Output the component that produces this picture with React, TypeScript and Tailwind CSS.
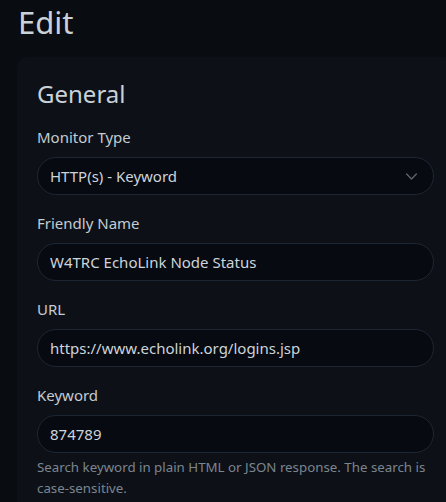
const font = { fontFamily: '"Noto Sans", "Open Sans", sans-serif' }

function Chevron() {
  return (
    <svg viewBox="0 0 16 16" className="h-[13px] w-[13px] text-[#5a626d]" fill="none" stroke="currentColor" strokeWidth={1.8} strokeLinecap="round" strokeLinejoin="round">
      <path d="m2 5 6 6 6-6" />
    </svg>
  )
}

function Field({ label, value, select }: { label: string; value: string; select?: boolean }) {
  return (
    <div className="mb-4">
      <label className="mb-2 block text-[15px] leading-[24px] text-[#c4cbd2]">{label}</label>
      <div className="flex h-[38px] items-center rounded-full border border-[#1d2634] bg-[#070a10] pl-[12px] pr-[15px]">
        <span className="flex-1 truncate text-[15px] leading-[24px] text-[#cdd4db]">{value}</span>
        {select && <Chevron />}
      </div>
    </div>
  )
}

export default function App() {
  return (
    <div style={font} className="min-h-screen w-full overflow-hidden bg-[#090c10] pl-[17px]">
      <h1 className="pl-[1px] pt-[4px] text-[31px] leading-[37px] font-normal text-[#c9d1d9]">Edit</h1>
      <div className="mt-[16px] w-[437px] shrink-0 rounded-[10px] bg-[#0d1117] px-[20px] pt-[22px] pb-6">
        <h4 className="mb-[17px] text-[24px] leading-[29px] font-normal text-[#c9d1d9]">General</h4>
        <Field label="Monitor Type" value="HTTP(s) - Keyword" select />
        <Field label="Friendly Name" value="W4TRC EchoLink Node Status" />
        <Field label="URL" value="https://www.echolink.org/logins.jsp" />
        <div className="mb-4">
          <label className="mb-2 block text-[15px] leading-[24px] text-[#c4cbd2]">Keyword</label>
          <div className="flex h-[38px] items-center rounded-full border border-[#1d2634] bg-[#070a10] px-[12px]">
            <span className="text-[15px] leading-[24px] text-[#cdd4db]">874789</span>
          </div>
          <div className="mt-1 text-[13.3px] leading-[21px] text-[#7b8590]">
            Search keyword in plain HTML or JSON response. The search is case-sensitive.
          </div>
        </div>
      </div>
    </div>
  )
}
